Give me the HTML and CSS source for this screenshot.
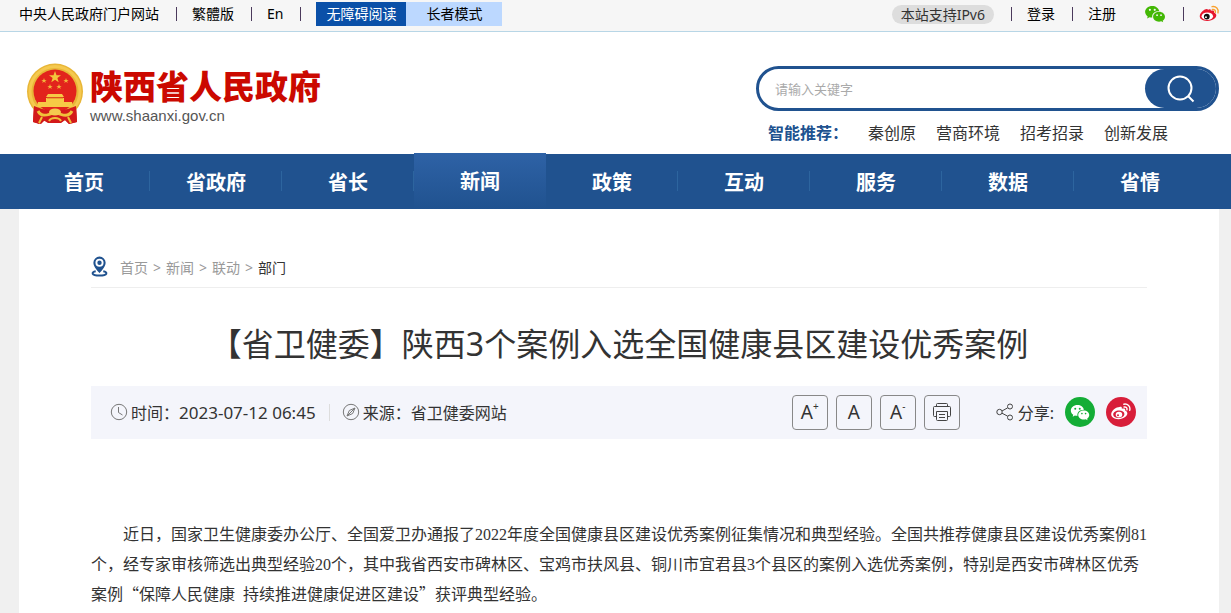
FILE: index.html
```html
<!DOCTYPE html>
<html lang="zh-CN">
<head>
    <meta charset="UTF-8">
    <meta name="viewport" content="width=device-width, initial-scale=1.0">
    <title>【省卫健委】陕西3个案例入选全国健康县区建设优秀案例</title>
    <link rel="stylesheet" href="styles.css">
</head>
<body>
    <svg class="symbols" aria-hidden="true">
        <symbol id="wechat" viewBox="0 0 24 20">
            <path fill="currentColor" fill-rule="evenodd" d="M9 1C4.300 1 1 4 1 7.600c0 2.100 1.100 3.900 2.900 5.100L3.200 15l2.700-1.400c1 .3 2 .5 3.100.4-.8-4 2.300-7.400 7.700-7.400C16 3.300 12.800 1 9 1zM6.300 4.200a1.200 1.200 0 1 1 0 2.400 1.200 1.200 0 0 1 0-2.400zM11.700 4.200a1.200 1.200 0 1 1 0 2.400 1.200 1.200 0 0 1 0-2.400z"/>
            <path fill="currentColor" fill-rule="evenodd" d="M16.500 7.500c-3.800 0-6.600 2.500-6.600 5.500s2.900 5.500 6.600 5.500c.8 0 1.600-.1 2.400-.4l2.200 1.200-.6-1.900c1.600-1 2.600-2.600 2.600-4.400 0-3-2.900-5.500-6.600-5.500zM14.300 10.300a1 1 0 1 1 0 2 1 1 0 0 1 0-2zM18.700 10.300a1 1 0 1 1 0 2 1 1 0 0 1 0-2z"/>
        </symbol>
    </svg>

    <div class="topbar">
        <div class="topbar-left">
            <a href="#">中央人民政府门户网站</a>
            <i class="sep"></i>
            <a href="#">繁體版</a>
            <i class="sep"></i>
            <a href="#">En</a>
            <i class="sep"></i>
            <div class="modes">
                <a class="mode barrier" href="#">无障碍阅读</a>
                <a class="mode elder" href="#">长者模式</a>
            </div>
        </div>
        <div class="topbar-right">
            <span class="ipv6">本站支持IPv6</span>
            <i class="sep"></i>
            <a href="#">登录</a>
            <i class="sep"></i>
            <a href="#">注册</a>
            <a class="top-wechat" href="#" aria-label="微信"><svg width="22" height="18"><use href="#wechat"/></svg></a>
            <i class="sep"></i>
            <a class="top-weibo" href="#" aria-label="微博">
                <svg width="21" height="18" viewBox="0 0 22 18">
                    <path fill="#e6162d" d="M9.500 4.500c1.500-1 3.300-.7 2.900 1.200 2-.7 4-.4 3.300 1.600 3 1 3.200 4.200.6 6.500-3.400 3-10.500 3.400-13.800.8C-.5 12 .8 8.600 3.900 5.900c2-1.800 4.700-3 5.600-1.400z"/>
                    <ellipse cx="8.700" cy="11.400" rx="6" ry="4" fill="#fff"/>
                    <circle cx="8.200" cy="11.700" r="3" fill="#111"/>
                    <circle cx="7.300" cy="12.300" r="1" fill="#fff"/>
                    <path fill="none" stroke="#f9a12e" stroke-width="1.500" stroke-linecap="round" d="M13.700 1.300c4-.8 7.300 2.400 6.200 6.500M14 4.200c2-.4 3.600 1 3.100 3"/>
                </svg>
            </a>
        </div>
    </div>

    <div class="header">
        <a class="logo" href="#">
            <svg width="58" height="62" viewBox="0 0 58 62" aria-hidden="true">
                <path fill="#cf1717" d="M8 42h42l1 17-8 2-4-4-4 3H23l-4-3-4 4-8-2z"/>
                <circle cx="29" cy="28.500" r="28" fill="#e8b637"/>
                <circle cx="29" cy="28.500" r="25" fill="none" stroke="#f5c94f" stroke-width="3"/>
                <circle cx="29" cy="28" r="21.500" fill="#e2241c"/>
                <path fill="#f3c63c" d="M29 8l1.500 4.300h4.500l-3.600 2.700 1.300 4.300L29 16.700l-3.700 2.600 1.300-4.300-3.600-2.700h4.500z"/>
                <g fill="#f3b63c">
                    <path id="star" d="M18 15l.7 1.900h2L19.100 18.100l.6 1.900L18 18.800l-1.700 1.200.6-1.900-1.600-1.200h2z"/>
                    <use href="#star" x="22"/>
                    <use href="#star" x="6" y="6"/>
                    <use href="#star" x="15" y="6"/>
                </g>
                <path fill="#f6cb45" d="M22 31h14l2 3H20zM20 35h18v4h8l1 5H11l1-5h8z"/>
                <path fill="none" stroke="#dd7f20" d="M21 35h16"/>
                <path fill="#d3191a" d="M8 43l8 3 6 1h14l6-1 8-3 1 16-8 2-4-4-5 3H22l-5-3-4 4-6-2z"/>
                <path fill="none" stroke="#efc03a" stroke-width="3" stroke-linejoin="round" d="M12 48c3 6 9 5 17 1 8 4 14 5 17-1"/>
                <path fill="none" stroke="#efc03a" stroke-width="2" d="M16 54l-3 6M42 54l3 6M23 58c2-4 10-4 12 0"/>
                <ellipse cx="29" cy="49" rx="6" ry="3.500" fill="#f5c94f"/>
            </svg>
            <span class="logo-text">
                <strong>陕西省人民政府</strong>
                <span>www.shaanxi.gov.cn</span>
            </span>
        </a>
        <div class="search">
            <form class="search-box">
                <input type="text" placeholder="请输入关键字" aria-label="请输入关键字">
                <button type="button" aria-label="搜索">
                    <svg width="28" height="28" viewBox="0 0 28 28" fill="none" stroke="#fff" stroke-width="2">
                        <circle cx="13" cy="13" r="11.500"/>
                        <path d="M21 21l5.500 5.500"/>
                    </svg>
                </button>
            </form>
            <div class="hot">
                <b>智能推荐：</b>
                <a href="#">秦创原</a>
                <a href="#">营商环境</a>
                <a href="#">招考招录</a>
                <a href="#">创新发展</a>
            </div>
        </div>
    </div>

    <nav class="nav">
        <a href="#">首页</a>
        <a href="#">省政府</a>
        <a href="#">省长</a>
        <a class="active" href="#">新闻</a>
        <a href="#">政策</a>
        <a href="#">互动</a>
        <a href="#">服务</a>
        <a href="#">数据</a>
        <a href="#">省情</a>
    </nav>

    <div class="main">
        <div class="crumbs">
            <svg width="17" height="22" viewBox="0 0 18 22" aria-hidden="true">
                <path fill="none" stroke="#20528f" stroke-width="2" d="M5 15.500c-5 1-5 4.500 4 4.500s9-3.500 4-4.500"/>
                <path fill="#20528f" fill-rule="evenodd" d="M9 0a6.500 6.500 0 0 0-6.500 6.500C2.500 11 9 17.500 9 17.500s6.500-6.500 6.500-11A6.500 6.500 0 0 0 9 0zm0 2.200a4.300 4.300 0 1 1 0 8.600 4.300 4.300 0 0 1 0-8.600z"/>
                <circle cx="9" cy="6.500" r="2.300" fill="#20528f"/>
            </svg>
            <a href="#">首页</a>
            <span>&gt;</span>
            <a href="#">新闻</a>
            <span>&gt;</span>
            <a href="#">联动</a>
            <span>&gt;</span>
            <a class="current" href="#">部门</a>
        </div>

        <h1>【省卫健委】陕西3个案例入选全国健康县区建设优秀案例</h1>

        <div class="info">
            <div class="meta time">
                <svg width="18" height="18" viewBox="0 0 18 18" fill="none" stroke="#777" aria-hidden="true">
                    <circle cx="9" cy="9" r="7.700"/>
                    <path d="M8.500 4v5.500l4 2.500"/>
                </svg>
                <span>时间：<span class="date">2023-07-12 06:45</span></span>
            </div>
            <div class="meta source">
                <svg width="18" height="18" viewBox="0 0 18 18" fill="none" stroke="#777" aria-hidden="true">
                    <circle cx="9" cy="9" r="7.700"/>
                    <path d="M13 5l-2.300 5.500L5 13l2.300-5.500zM13 5l-8 8"/>
                </svg>
                <span>来源：省卫健委网站</span>
            </div>
            <div class="tools">
                <button type="button">A<sup>+</sup></button>
                <button type="button">A</button>
                <button type="button">A<sup>-</sup></button>
                <button type="button" aria-label="打印">
                    <svg width="18" height="18" viewBox="0 0 18 18" fill="none" stroke="#444">
                        <path d="M3.500 3.500v-2q0-1 1-1h9q1 0 1 1v2M3.500 13.500h-2q-1 0-1-1v-8q0-1 1-1h15q1 0 1 1v8q0 1-1 1h-2M3.500 8.500h11v8q0 1-1 1h-9q-1 0-1-1zM6 11.500h6M6 14.500h6"/>
                    </svg>
                </button>
            </div>
            <div class="share">
                <svg width="18" height="18" viewBox="0 0 18 18" fill="none" stroke="#444" aria-hidden="true">
                    <circle cx="3.500" cy="9" r="2.700"/>
                    <circle cx="14" cy="3.500" r="2.500"/>
                    <circle cx="14" cy="14.500" r="2.500"/>
                    <path d="M6 8l5.700-3.200M6 10.200l5.700 3"/>
                </svg>
                <span>分享:</span>
                <a class="round green" href="#" aria-label="分享到微信"><svg width="20" height="17"><use href="#wechat"/></svg></a>
                <a class="round red" href="#" aria-label="分享到微博">
                    <svg width="20" height="18" viewBox="0 0 20 18">
                        <path fill="#fff" fill-rule="evenodd" d="M8.500 4c1.600-.8 2.700 0 2.300 1.800 2-.8 4-.4 3.300 1.600 3 1 2.900 4.200.3 6.400-3.200 2.800-9.400 3.200-12.500.8C-.9 12.300 0 8.800 3 6.300 4.900 4.800 7 4 8.500 4zM8 7.500c-3.300.1-5.800 1.700-5.800 4s2.500 3.800 5.600 3.600c3.200-.2 5.600-2 5.600-4.200S11 7.400 8 7.500z"/>
                        <path fill="#fff" fill-rule="evenodd" d="M8 8.700a3.300 2.900 0 1 0 0 5.800 3.300 2.900 0 0 0 0-5.800zM7 11.200a1 1 0 1 1 0 2 1 1 0 0 1 0-2z"/>
                        <path fill="none" stroke="#fff" stroke-width="1.400" stroke-linecap="round" d="M12.800 1.200c3.800-.8 7 2.400 5.900 6.200M13.100 4c1.900-.4 3.300 1 2.800 2.800"/>
                    </svg>
                </a>
            </div>
        </div>

        <div class="article">
            <p>近日，国家卫生健康委办公厅、全国爱卫办通报了2022年度全国健康县区建设优秀案例征集情况和典型经验。全国共推荐健康县区建设优秀案例81个，经专家审核筛选出典型经验20个，其中我省西安市碑林区、宝鸡市扶风县、铜川市宜君县3个县区的案例入选优秀案例，特别是西安市碑林区优秀案例<span class="quote">“</span>保障人民健康&nbsp; 持续推进健康促进区建设<span class="quote">”</span>获评典型经验。</p>
        </div>
    </div>
</body>
</html>
```
FILE: styles.css
```css
* {
    box-sizing: border-box;
}

body {
    display: flex;
    flex-direction: column;
    min-height: 100vh;
    margin: 0;
    font-family: "Noto Sans", "Noto Sans CJK SC", sans-serif;
    font-size: 14px;
    color: #333;
    background-color: #f0f0f0;
}

a {
    color: inherit;
    text-decoration: none;
}

svg {
    display: block;
    flex: none;
}

.symbols {
    display: none;
}

/* 顶部 */
.topbar {
    display: flex;
    justify-content: space-between;
    height: 32px;
    padding: 0 11px 0 19px;
    background-color: #f6f6f6;
    border-bottom: 1px solid #b8d6e6;
    color: #000;
    line-height: 28px;
    white-space: nowrap;
}

.topbar-left,
.topbar-right {
    display: flex;
    align-items: center;
    height: 28px;
}

.sep {
    width: 1px;
    height: 14px;
    margin: 0 15px 0 17px;
    background-color: #4b3a5c;
}

.modes {
    display: flex;
    line-height: 24px;
}

.mode {
    height: 24px;
    text-align: center;
}

.barrier {
    width: 90px;
    background-color: #0a50a8;
    color: #fff;
}

.elder {
    width: 96px;
    background-color: #bcd8ff;
}

.ipv6 {
    padding: 0 9px;
    border-radius: 10px;
    background-color: #ddd;
    color: #333;
    line-height: 19px;
}

.top-wechat {
    margin-left: 28px;
    color: #43b805;
}

/* 头部 */
.header {
    display: flex;
    justify-content: space-between;
    height: 122px;
    padding: 0 12px 0 26px;
    background-color: #fff;
}

.logo {
    display: flex;
    gap: 6px;
    height: 62px;
    margin-top: 31px;
}

.logo-text {
    display: flex;
    flex-direction: column;
    color: #555;
    font-family: "Liberation Sans", sans-serif;
    font-size: 15px;
    line-height: 16px;
}

.logo-text strong {
    color: #cb0900;
    font-family: "Noto Sans CJK SC", sans-serif;
    font-size: 33px;
    font-weight: 900;
    line-height: 45px;
}

.search {
    width: 463px;
    padding-top: 34px;
}

.search-box {
    display: flex;
    height: 45px;
    border: 3px solid #20528f;
    border-radius: 23px;
}

.search-box input {
    flex: 1;
    min-width: 0;
    padding: 0 16px;
    border: none;
    outline: none;
    background: none;
    font: inherit;
}

.search-box input::placeholder {
    color: #aaa;
    font-size: 13px;
}

.search-box button {
    display: flex;
    align-items: center;
    justify-content: center;
    width: 71px;
    border: none;
    border-radius: 20px;
    background-color: #20528f;
    cursor: pointer;
}

.hot {
    display: flex;
    gap: 20px;
    padding: 10px 0 0 12px;
    font-size: 16px;
    line-height: 24px;
    white-space: nowrap;
}

.hot b {
    color: #20528f;
}

/* 导航 */
.nav {
    display: flex;
    height: 55px;
    padding: 0 25px 0 18px;
    background-color: #20528f;
}

.nav a {
    flex: 1;
    background: linear-gradient(#2d659f, #2d659f) right 17px / 1px 20px no-repeat;
    color: #fff;
    font-size: 20px;
    font-weight: bold;
    line-height: 58px;
    text-align: center;
}

.nav a:last-child {
    background: none;
}

.nav .active {
    margin-top: -1px;
    background: linear-gradient(#2e62a6, #20528f);
}

/* 正文 */
.main {
    flex: 1;
    margin: 0 12px 0 19px;
    padding: 46px 72px 0;
    background-color: #fff;
}

.crumbs {
    display: flex;
    align-items: center;
    gap: 5px;
    height: 33px;
    padding-bottom: 8px;
    border-bottom: 1px solid #eee;
    color: #999;
}

.crumbs svg {
    margin-right: 7px;
}

.crumbs .current {
    color: #333;
}

h1 {
    margin: 31px 0 17px;
    font-size: 32px;
    font-weight: normal;
    line-height: 50px;
    text-align: center;
}

.info {
    display: flex;
    align-items: center;
    height: 53px;
    padding: 0 11px 1px 19px;
    background-color: #f4f5fb;
    font-size: 16px;
    white-space: nowrap;
}

.meta {
    display: flex;
    align-items: center;
    gap: 3px;
}

.date {
    font-size: 17px;
}

.source {
    margin-left: 13px;
    padding-left: 13px;
    background: linear-gradient(#ddd, #ddd) left center / 1px 17px no-repeat;
}

.tools {
    display: flex;
    gap: 8px;
    margin-left: auto;
}

.tools button {
    display: flex;
    align-items: center;
    justify-content: center;
    width: 36px;
    height: 35px;
    padding: 0;
    border: 1px solid #888;
    border-radius: 4px;
    background: none;
    color: #333;
    font-family: inherit;
    font-size: 19px;
    cursor: pointer;
}

.tools sup {
    align-self: flex-start;
    padding-top: 3px;
    font-size: 10px;
}

.share {
    display: flex;
    align-items: center;
    gap: 4px;
    margin-left: 36px;
}

.round {
    display: flex;
    align-items: center;
    justify-content: center;
    width: 30px;
    height: 30px;
    margin-left: 7px;
    border-radius: 50%;
    color: #fff;
}

.green {
    background-color: #14ad36;
}

.red {
    background-color: #d81e3a;
}

.article {
    padding-top: 81px;
    font-family: "Liberation Serif", "Noto Sans CJK SC", serif;
    font-size: 16px;
    line-height: 30px;
}

.article p {
    margin: 0;
    text-indent: 2em;
}

.article .quote {
    font-family: "Noto Sans CJK SC", sans-serif;
    line-height: 1;
}
```
